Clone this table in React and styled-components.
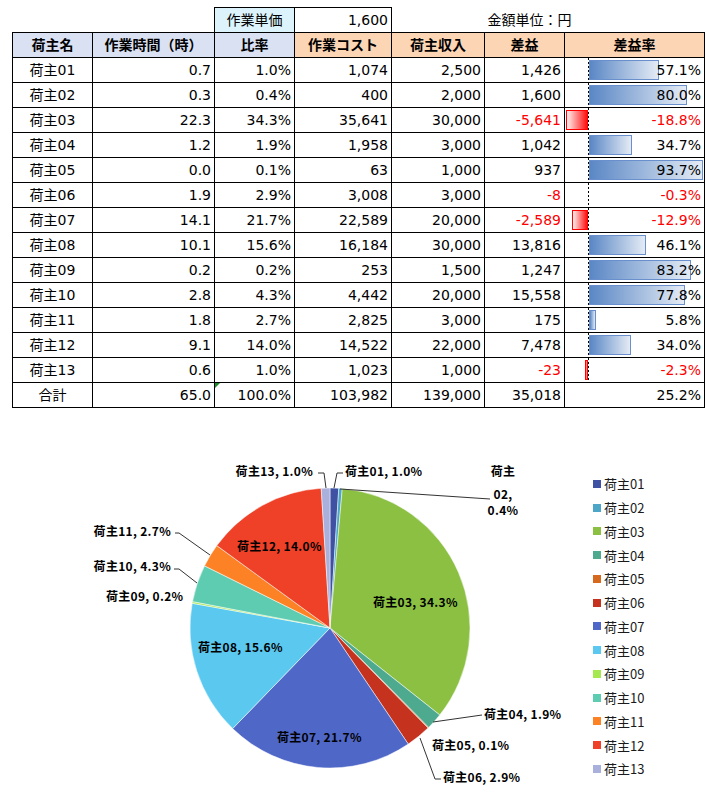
import React from "react";
import styled, { createGlobalStyle } from "styled-components";

const GlobalStyle = createGlobalStyle`
  body {
    margin: 0;
    background: #fff;
    font-family: "DejaVu Sans", "Noto Sans CJK JP", sans-serif;
  }
`;

const rows = [
  ["荷主01", "0.7", "1.0%", "1,074", "2,500", "1,426", "57.1%", 57.1],
  ["荷主02", "0.3", "0.4%", "400", "2,000", "1,600", "80.0%", 80.0],
  ["荷主03", "22.3", "34.3%", "35,641", "30,000", "-5,641", "-18.8%", -18.8],
  ["荷主04", "1.2", "1.9%", "1,958", "3,000", "1,042", "34.7%", 34.7],
  ["荷主05", "0.0", "0.1%", "63", "1,000", "937", "93.7%", 93.7],
  ["荷主06", "1.9", "2.9%", "3,008", "3,000", "-8", "-0.3%", -0.3],
  ["荷主07", "14.1", "21.7%", "22,589", "20,000", "-2,589", "-12.9%", -12.9],
  ["荷主08", "10.1", "15.6%", "16,184", "30,000", "13,816", "46.1%", 46.1],
  ["荷主09", "0.2", "0.2%", "253", "1,500", "1,247", "83.2%", 83.2],
  ["荷主10", "2.8", "4.3%", "4,442", "20,000", "15,558", "77.8%", 77.8],
  ["荷主11", "1.8", "2.7%", "2,825", "3,000", "175", "5.8%", 5.8],
  ["荷主12", "9.1", "14.0%", "14,522", "22,000", "7,478", "34.0%", 34.0],
  ["荷主13", "0.6", "1.0%", "1,023", "1,000", "-23", "-2.3%", -2.3],
];

const slices = [
  { name: "荷主01", pct: 1.0, color: "#3f51a3" },
  { name: "荷主02", pct: 0.4, color: "#4ba6c8" },
  { name: "荷主03", pct: 34.3, color: "#8bc043" },
  { name: "荷主04", pct: 1.9, color: "#4eaa8f" },
  { name: "荷主05", pct: 0.1, color: "#d6691e" },
  { name: "荷主06", pct: 2.9, color: "#c5331e" },
  { name: "荷主07", pct: 21.7, color: "#4f67c7" },
  { name: "荷主08", pct: 15.6, color: "#5bc8f0" },
  { name: "荷主09", pct: 0.2, color: "#a6e850" },
  { name: "荷主10", pct: 4.3, color: "#5eccb0" },
  { name: "荷主11", pct: 2.7, color: "#fc8225" },
  { name: "荷主12", pct: 14.0, color: "#ef4128" },
  { name: "荷主13", pct: 1.0, color: "#a9b0dc" },
];

// pie labels: [text, x, y, anchor]
const labels = [
  ["荷主13, 1.0%", 313, 49, "end"],
  ["荷主01, 1.0%", 345, 49, "start"],
  ["荷主", 503, 49, "middle"],
  ["02,", 503, 72, "middle"],
  ["0.4%", 503, 88, "middle"],
  ["荷主12, 14.0%", 237, 124, "start"],
  ["荷主03, 34.3%", 373, 180, "start"],
  ["荷主11, 2.7%", 171, 109, "end"],
  ["荷主10, 4.3%", 171, 144, "end"],
  ["荷主09, 0.2%", 106, 174, "start"],
  ["荷主08, 15.6%", 198, 225, "start"],
  ["荷主07, 21.7%", 277, 315, "start"],
  ["荷主04, 1.9%", 484, 292, "start"],
  ["荷主05, 0.1%", 432, 323, "start"],
  ["荷主06, 2.9%", 443, 355, "start"],
];

const leaders = [
  "318,52 324,52 326,67",
  "343,52 337,52 334,67",
  "340,68 490,78",
  "175,112 179,112 210,134",
  "174,148 179,148 197,162",
  "433,301 482,294",
  "420,317 435,358 441,358",
];

const Page = styled.div`
  width: 714px;
  height: 792px;
  padding: 7px 0 0 12px;
  box-sizing: border-box;
  overflow: hidden;
`;

const Sheet = styled.table`
  border-collapse: collapse;
  table-layout: fixed;
  width: 692px;
  font-size: 14px;
  color: #000;
`;

const Cell = styled.td`
  height: 24px;
  padding: 0 3px;
  border: ${(p) => (p.$blank ? "none" : "1px solid #000")};
  background: ${(p) => p.$bg || "transparent"};
  text-align: ${(p) => p.$align || "right"};
  color: ${(p) => (p.$neg ? "#ff0000" : "#000")};
  line-height: 24px;
  white-space: nowrap;
  overflow: hidden;
  position: relative;
`;

const Head = styled.th`
  height: 24px;
  padding: 0;
  border: 1px solid #000;
  background: ${(p) => p.$bg};
  font-weight: 700;
  text-align: center;
  line-height: 24px;
  white-space: nowrap;
`;

const CellText = styled.span`
  position: relative;
  z-index: 1;
`;

const Axis = styled.div`
  position: absolute;
  left: 23px;
  top: 0;
  bottom: 0;
  width: 1px;
  background-image: linear-gradient(#000 50%, transparent 50%);
  background-size: 1px 4px;
`;

const DataBar = styled.div`
  position: absolute;
  top: 2px;
  bottom: 2px;
  box-sizing: border-box;
  border: 1px solid ${(p) => (p.$neg ? "#ff0000" : "#6a8fcd")};
  background: ${(p) =>
    p.$neg
      ? "linear-gradient(to right, #fff0f0, #ff1010)"
      : "linear-gradient(to right, #5a87c5, #e4ebf5)"};
`;

const ErrorMark = styled.div`
  position: absolute;
  left: 0;
  top: 0;
  width: 0;
  height: 0;
  border-top: 5px solid #1f8a2c;
  border-right: 5px solid transparent;
`;

const ChartArea = styled.div`
  display: flex;
  align-items: flex-start;
  margin: 13px 0 0 -12px;
`;

const Legend = styled.ul`
  list-style: none;
  margin: 51px 0 0 5px;
  padding: 0;
  font-family: "Noto Sans CJK JP", sans-serif;
  font-size: 13px;
  color: #1a1a1a;
`;

const LegendItem = styled.li`
  height: 23.75px;
  display: flex;
  align-items: center;
  gap: 3px;
`;

const Swatch = styled.span`
  width: 8px;
  height: 8px;
  background: ${(p) => p.$color};
`;

const PieLabel = styled.text`
  font-family: "Noto Sans CJK JP", sans-serif;
  font-weight: 700;
  font-size: 12px;
  letter-spacing: 0.3px;
  fill: #000;
`;

const PX_PER_PCT = 1.23;

function RateCell({ text, value, showAxis }) {
  const neg = value < 0;
  let bar = null;
  if (showAxis) {
    if (neg) {
      const w = Math.min(-value * PX_PER_PCT, 22);
      if (w >= 1) bar = <DataBar $neg style={{ left: 23 - w, width: w }} />;
    } else {
      const w = Math.min(value * PX_PER_PCT, 114);
      bar = <DataBar style={{ left: 24, width: w }} />;
    }
  }
  return (
    <Cell $neg={neg}>
      {showAxis && <Axis />}
      {bar}
      <CellText>{text}</CellText>
    </Cell>
  );
}

function Pie() {
  const cx = 330;
  const cy = 207;
  const r = 140;
  const total = slices.reduce((s, d) => s + d.pct, 0);
  let a0 = -Math.PI / 2;
  const paths = slices.map((d) => {
    const a1 = a0 + (d.pct / total) * Math.PI * 2;
    const x0 = cx + r * Math.cos(a0);
    const y0 = cy + r * Math.sin(a0);
    const x1 = cx + r * Math.cos(a1);
    const y1 = cy + r * Math.sin(a1);
    const large = a1 - a0 > Math.PI ? 1 : 0;
    a0 = a1;
    return (
      <path
        key={d.name}
        d={`M${cx},${cy} L${x0},${y0} A${r},${r} 0 ${large} 1 ${x1},${y1} Z`}
        fill={d.color}
        stroke="#fff"
        strokeWidth="0.5"
      />
    );
  });
  return (
    <svg width="588" height="372" viewBox="0 0 588 372">
      {paths}
      {leaders.map((p) => (
        <polyline key={p} points={p} fill="none" stroke="#333" strokeWidth="1" />
      ))}
      {labels.map(([t, x, y, anchor]) => (
        <PieLabel key={t + x + y} x={x} y={y} textAnchor={anchor} dominantBaseline="central">
          {t}
        </PieLabel>
      ))}
    </svg>
  );
}

export default function App() {
  return (
    <Page>
      <GlobalStyle />
      <Sheet>
        <colgroup>
          <col style={{ width: 80 }} />
          <col style={{ width: 122 }} />
          <col style={{ width: 80 }} />
          <col style={{ width: 97 }} />
          <col style={{ width: 93 }} />
          <col style={{ width: 80 }} />
          <col style={{ width: 140 }} />
        </colgroup>
        <tbody>
          <tr>
            <Cell $blank colSpan={2} />
            <Cell $align="center" $bg="#ddf3fb">作業単価</Cell>
            <Cell>1,600</Cell>
            <Cell $blank />
            <Cell $blank colSpan={2} $align="left">金額単位：円</Cell>
          </tr>
          <tr>
            <Head $bg="#d9e1f2">荷主名</Head>
            <Head $bg="#d9e1f2">作業時間（時）</Head>
            <Head $bg="#d9e1f2">比率</Head>
            <Head $bg="#fcd5b4">作業コスト</Head>
            <Head $bg="#fcd5b4">荷主収入</Head>
            <Head $bg="#fcd5b4">差益</Head>
            <Head $bg="#fcd5b4">差益率</Head>
          </tr>
          {rows.map((r) => (
            <tr key={r[0]}>
              <Cell $align="center">{r[0]}</Cell>
              <Cell>{r[1]}</Cell>
              <Cell>{r[2]}</Cell>
              <Cell>{r[3]}</Cell>
              <Cell>{r[4]}</Cell>
              <Cell $neg={r[5].startsWith("-")}>{r[5]}</Cell>
              <RateCell text={r[6]} value={r[7]} showAxis />
            </tr>
          ))}
          <tr>
            <Cell $align="center">合計</Cell>
            <Cell>65.0</Cell>
            <Cell>
              <ErrorMark />
              100.0%
            </Cell>
            <Cell>103,982</Cell>
            <Cell>139,000</Cell>
            <Cell>35,018</Cell>
            <RateCell text="25.2%" value={25.2} />
          </tr>
        </tbody>
      </Sheet>
      <ChartArea>
        <Pie />
        <Legend>
          {slices.map((d) => (
            <LegendItem key={d.name}>
              <Swatch $color={d.color} />
              {d.name}
            </LegendItem>
          ))}
        </Legend>
      </ChartArea>
    </Page>
  );
}
